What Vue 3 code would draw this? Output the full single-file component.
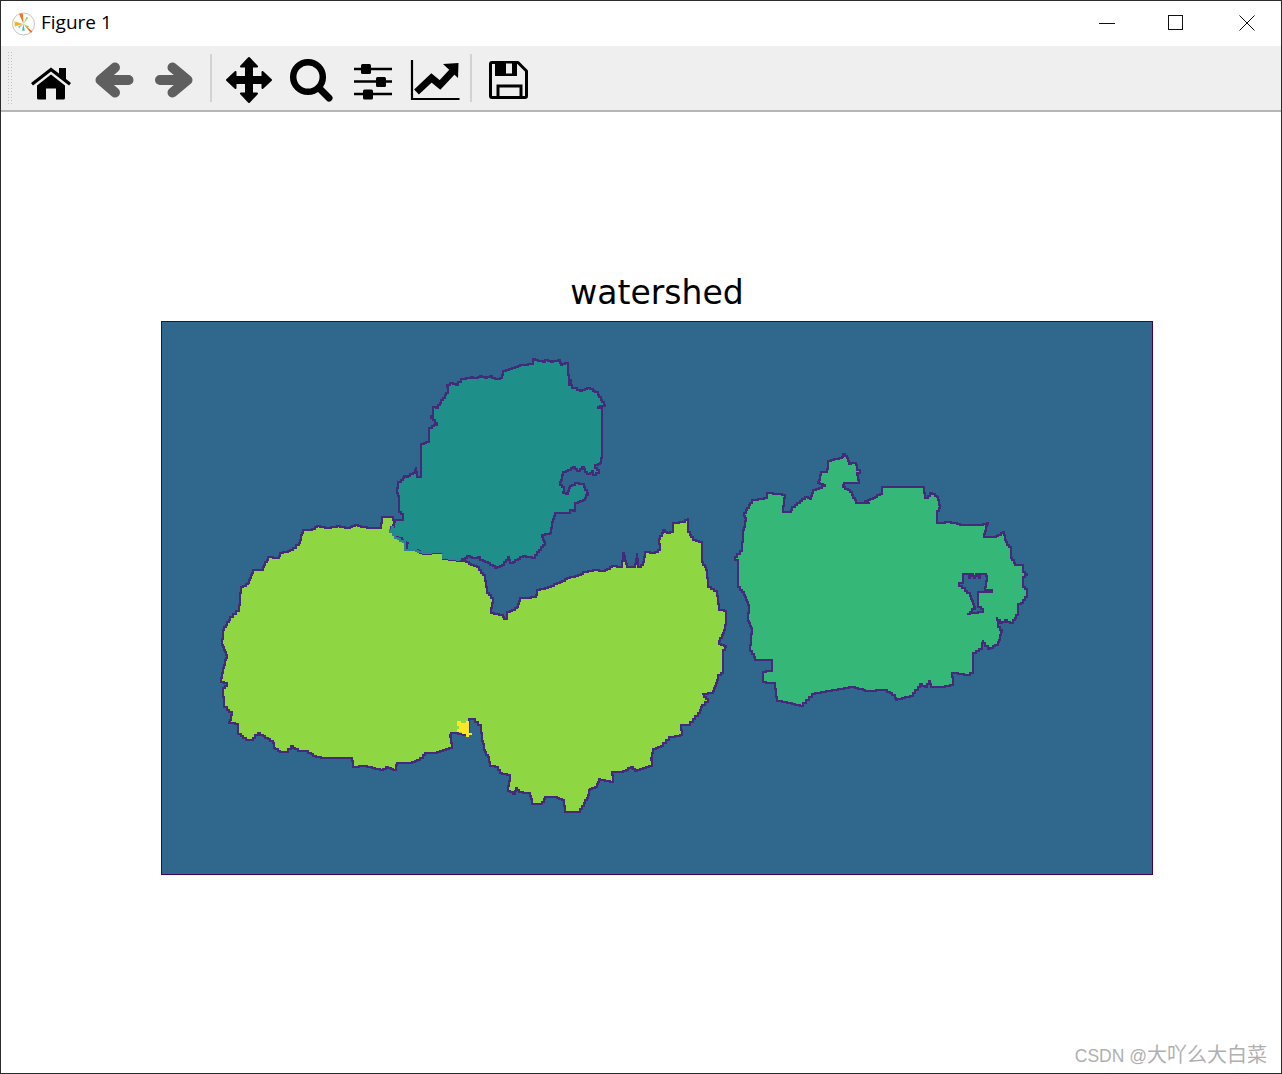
<script setup>
// outlines of the watershed regions, in page pixels (the svg viewBox uses the same numbers)
const tealPts = '533,359 533,364 523,365 515,368 503,372 502,378 497,379 492,376 487,378 482,376 478,378 473,377 463,379 458,385 453,383 447,387 448,393 443,400 438,408 433,406 433,416 431,418 437,425 429,429 429,442 421,445 421,477 417,477 416,467 415,473 408,477 404,475 403,480 398,483 397,493 399,498 399,512 403,515 403,520 395,520 394,527 390,532 395,537 400,538 403,542 409,543 405,547 407,550 415,550 423,554 433,553 443,552 443,559 460,561 467,556 472,558 478,557 480,560 488,563 495,568 502,565 508,557 510,563 515,560 523,556 532,558 537,552 545,542 542,535 550,533 552,522 555,513 568,513 570,510 575,511 575,503 583,500 588,493 584,484 577,483 570,488 568,494 563,492 564,487 560,482 563,472 573,467 577,471 582,467 587,474 592,471 593,475 599,470 595,465 600,463 602,452 602,408 598,407 605,405 598,392 590,388 582,391 577,388 572,387 571,380 569,386 568,363 562,365 560,360 553,362 548,360 545,362 535,359'

const limePts = '382,517 393,517 394,525 390,532 395,538 405,543 405,550 413,550 423,553 433,552 443,552 443,558 460,560 477,567 485,578 487,593 493,600 491,613 502,615 504,619 507,619 507,612 517,607 520,598 536,597 537,590 545,588 557,583 567,578 578,575 583,572 593,570 602,571 612,566 622,567 623,553 627,567 635,567 637,553 638,567 643,562 645,552 653,553 660,549 659,539 663,530 667,533 673,530 673,523 682,522 688,518 688,532 693,540 702,543 702,562 707,572 708,587 717,593 719,610 726,611 726,625 723,635 719,644 726,647 723,652 723,673 718,677 717,683 713,693 702,694 708,702 702,707 700,713 690,725 680,725 682,735 672,737 663,746 653,750 651,760 652,766 637,771 633,767 623,772 612,772 613,782 600,779 597,787 590,790 587,800 580,812 565,812 564,800 557,797 547,797 542,804 533,804 530,793 520,792 517,788 515,794 508,789 510,775 502,773 498,767 490,765 489,757 485,750 482,738 481,725 475,719 469,719 469,733 465,735 458,733 452,733 450,737 452,748 437,753 428,753 420,760 412,763 397,763 396,770 388,767 383,770 375,768 367,766 354,767 352,758 330,758 318,757 308,751 300,751 293,746 288,752 283,752 275,748 273,741 260,733 253,740 248,740 238,732 238,724 229,722 232,712 224,705 223,688 227,683 221,681 223,668 227,655 222,642 223,630 230,617 239,608 241,587 248,583 253,570 262,570 265,562 268,557 278,558 280,553 290,550 299,543 303,530 310,530 317,526 325,528 337,526 347,528 355,525 367,528 380,528'

const greenPts = '843,454 847,458 849,464 856,462 857,470 860,473 857,475 859,483 845,483 843,487 850,492 856,503 870,503 865,501 875,497 882,492 882,487 923,487 925,498 930,493 937,497 940,508 937,513 937,523 948,522 957,524 963,525 980,525 988,523 984,537 993,537 1003,532 1007,545 1011,548 1011,558 1015,565 1023,565 1023,572 1027,575 1023,578 1023,587 1027,590 1027,597 1023,603 1018,604 1018,615 1013,623 1007,620 1002,623 997,617 998,627 1002,632 998,645 990,649 983,640 982,649 973,655 973,673 970,675 952,672 953,685 942,687 932,687 930,681 927,687 922,684 913,696 897,700 895,695 887,690 868,691 855,687 835,690 815,694 803,706 787,702 777,700 775,683 763,682 763,672 772,670 772,660 757,660 750,648 752,628 748,618 749,605 744,592 738,585 738,560 735,557 742,548 743,530 746,518 744,513 752,500 767,498 767,493 785,495 783,512 789,512 792,507 805,497 810,499 813,490 825,485 818,482 821,472 827,471 828,461 842,457'

const holePts = '963,574 968,574 969,578 971,574 974,578 976,574 979,578 980,574 985,574 987,578 985,590 992,590 992,592 978,592 978,607 983,610 983,612 967,614 975,607 970,593 959,583 963,582'

const sharedPts = '394,527 390,532 395,538 405,543 405,550 413,550 423,553 433,552 443,552 443,558 460,560'

// watershed edges run along pixels, so break each segment into small steps
function stairs(str, closed = true) {
  const pts = str.split(' ').map(p => p.split(',').map(Number))
  let d = `M${pts[0][0]} ${pts[0][1]}`
  const count = closed ? pts.length : pts.length - 1
  for (let i = 0; i < count; i++) {
    const [x1, y1] = pts[i]
    const [x2, y2] = pts[(i + 1) % pts.length]
    const n = Math.max(1, Math.ceil(Math.max(Math.abs(x2 - x1), Math.abs(y2 - y1)) / 3))
    for (let s = 1; s <= n; s++) {
      d += `H${Math.round(x1 + ((x2 - x1) * s) / n)}V${Math.round(y1 + ((y2 - y1) * s) / n)}`
    }
  }
  return closed ? d + 'Z' : d
}

const tealPath = stairs(tealPts)
const limePath = stairs(limePts)
const greenPath = stairs(greenPts) + stairs(holePts)
const sharedPath = stairs(sharedPts, false)
</script>

<template>
  <div class="window">
    <header class="titlebar">
      <svg class="logo" viewBox="0 0 26 26" width="26" height="26">
        <circle cx="12.500" cy="13" r="11" fill="#fff" stroke="#c4c4c4" />
        <path d="M12.500 13L8 2.800L11.800 2.600Z" fill="#f2701e" />
        <path d="M12.500 13L21.500 20.500L19.800 22Z" fill="#f2701e" />
        <path d="M12.500 13L3.500 10.600L3.800 15.400Z" fill="#f7b21c" />
        <path d="M12.500 13L15.500 5.800L17.300 6.800Z" fill="#a5d35a" />
        <path d="M12.500 13L11 19.500L13.800 19.800Z" fill="#4fb8a0" />
        <path d="M12.500 13L18 15.500L17 17Z" fill="#9cc850" />
        <path d="M12.500 13L7 15.500L8 17.500Z" fill="#8cc4dc" />
      </svg>
      <span class="caption">Figure 1</span>
      <div class="controls">
        <svg viewBox="0 0 16 16" width="16" height="16" class="ctl-min"><path d="M0 8.500H16" stroke="#111" fill="none" /></svg>
        <svg viewBox="0 0 16 16" width="16" height="16" class="ctl-max"><rect x="0.500" y="0.500" width="14" height="14" stroke="#111" fill="none" /></svg>
        <svg viewBox="0 0 16 16" width="16" height="16" class="ctl-close"><path d="M0.500 0.500L15.500 15.500M15.500 0.500L0.500 15.500" stroke="#111" fill="none" /></svg>
      </div>
    </header>

    <div class="toolbar">
      <div class="gripper"></div>
      <svg class="tool" viewBox="20 50 62 60">
        <path d="M51 67.500L31 83L33 85.500L51 71.500L69 85.500L71 83L66 79V68H59V73.500Z" fill="#000" />
        <path d="M51 74.500L37 85.500V98Q37 99.500 38.500 99.500H46V88.500H56V99.500H63.500Q65 99.500 65 98V85.500Z" fill="#000" />
      </svg>
      <svg class="tool" viewBox="82 50 62 60">
        <path d="M115 67.500L100.500 80L115 92.500M102 80H128.500" stroke="#5f5f5f" stroke-width="10" stroke-linecap="round" stroke-linejoin="round" fill="none" />
      </svg>
      <svg class="tool" viewBox="144 50 62 60">
        <path d="M172.500 67.500L187.500 80L172.500 92.500M160 80H186" stroke="#5f5f5f" stroke-width="10" stroke-linecap="round" stroke-linejoin="round" fill="none" />
      </svg>
      <div class="sep"></div>
      <svg class="tool" viewBox="218 50 62 60">
        <path d="M249 58L257 66.500H252V77H262.500V72L271 80L262.500 88V83H252V93.500H257L249 102L241 93.500H246V83H235.500V88L227 80L235.500 72V77H246V66.500H241Z" fill="#000" stroke="#000" stroke-width="2" stroke-linejoin="round" />
      </svg>
      <svg class="tool" viewBox="280 50 62 60">
        <circle cx="308" cy="77" r="14.800" stroke="#000" stroke-width="6.500" fill="none" />
        <path d="M319 88L329 98" stroke="#000" stroke-width="7" stroke-linecap="round" />
      </svg>
      <svg class="tool" viewBox="342 50 62 60">
        <path d="M354 69H392M354 81.500H392M354 94H392" stroke="#000" stroke-width="2.500" />
        <rect x="361" y="64" width="10" height="10" rx="1.500" fill="#000" />
        <rect x="376" y="77" width="10" height="10" rx="1.500" fill="#000" />
        <rect x="363" y="89.500" width="10" height="10" rx="1.500" fill="#000" />
      </svg>
      <svg class="tool" viewBox="404 50 62 60">
        <path d="M412 60V99H459.500" stroke="#000" stroke-width="2.200" fill="none" />
        <path d="M416.500 92L431.500 78L440 85L453 71" stroke="#000" stroke-width="7" fill="none" />
        <path d="M443 64L458.500 63L458 78Z" fill="#000" />
      </svg>
      <div class="sep"></div>
      <svg class="tool" viewBox="478 50 62 60">
        <path d="M492 62.500H518L526.500 71V96Q526.500 97.500 525 97.500H492Q490.500 97.500 490.500 96V64Q490.500 62.500 492 62.500Z" stroke="#000" stroke-width="3" fill="none" stroke-linejoin="round" />
        <path d="M495 62H517V76H495Z" fill="#000" />
        <rect x="506" y="63.500" width="6" height="10" fill="#efefef" />
        <path d="M498 98V86H521V98" stroke="#000" stroke-width="3" fill="none" />
      </svg>
    </div>

    <main class="figure">
      <div class="plot-title">watershed</div>
      <svg class="plot" viewBox="161 321 992 554" width="992" height="554">
        <rect x="161.500" y="321.500" width="991" height="553" fill="#30678d" stroke="#440154" />
        <g class="regions" stroke="#452a7c" stroke-width="1.100" fill-rule="evenodd">
          <path :d="limePath" fill="#8fd742" />
          <path :d="tealPath" fill="#1f8f8a" />
          <path :d="greenPath" fill="#35b778" />
          <path :d="sharedPath" fill="none" stroke="#2a8590" stroke-width="1.100" />
          <path d="M457 721H461V723H466V721H469V733H472V735H469V737H466V734H462V732H457V729H459V726H457Z" fill="#fde725" stroke="none" />
        </g>
      </svg>
    </main>

    <div class="watermark"><span class="wm-latin">CSDN @</span>大吖么大白菜</div>
  </div>
</template>

<style scoped>
.window {
  position: relative;
  box-sizing: border-box;
  width: 1282px;
  height: 1074px;
  display: flex;
  flex-direction: column;
  border: 1px solid #2b2b2b;
  background: #fff;
  overflow: hidden;
}

.titlebar {
  height: 45px;
  flex: none;
  display: flex;
  align-items: center;
  padding-left: 10px;
  box-sizing: border-box;
}

.logo {
  margin-top: 1px;
  margin-right: 4px;
}

.caption {
  font-family: "Open Sans", "Noto Sans", sans-serif;
  font-size: 19px;
  line-height: 26px;
  color: #000;
  margin-top: -4px;
}

.controls {
  margin-left: auto;
  display: flex;
  align-items: center;
  padding-right: 26px;
  margin-top: -2px;
}

.controls svg {
  display: block;
}

.ctl-max {
  margin: 0 55px 0 53px;
}

.toolbar {
  flex: none;
  height: 66px;
  box-sizing: border-box;
  padding-top: 4px;
  display: flex;
  align-items: center;
  background: #efefef;
  border-bottom: 2px solid #b6b6b6;
}

.gripper {
  width: 5px;
  height: 54px;
  margin: -4px 8px 0 6px;
  background-image: radial-gradient(#c4c4c4 0.8px, transparent 1px);
  background-size: 3px 3px;
}

.tool {
  width: 62px;
  height: 60px;
  flex: none;
  display: block;
}

.sep {
  width: 2px;
  height: 48px;
  margin: -4px 6px 0 4px;
  background: #d2d2d2;
}

.figure {
  flex: 1;
  display: flex;
  flex-direction: column;
  align-items: center;
  padding: 161px 128px 0 160px;
}

.plot-title {
  font-family: "DejaVu Sans", sans-serif;
  font-size: 33px;
  line-height: 40px;
  height: 48px;
  color: #000;
}

.plot {
  display: block;
  flex: none;
}

.regions path {
  shape-rendering: crispEdges;
}

.watermark {
  position: absolute;
  right: 14px;
  bottom: 4px;
  font-family: "Liberation Sans", "Noto Sans CJK SC", sans-serif;
  font-size: 20px;
  line-height: 26px;
  color: #b0b0b0;
}

.wm-latin {
  font-size: 17.500px;
}
</style>
